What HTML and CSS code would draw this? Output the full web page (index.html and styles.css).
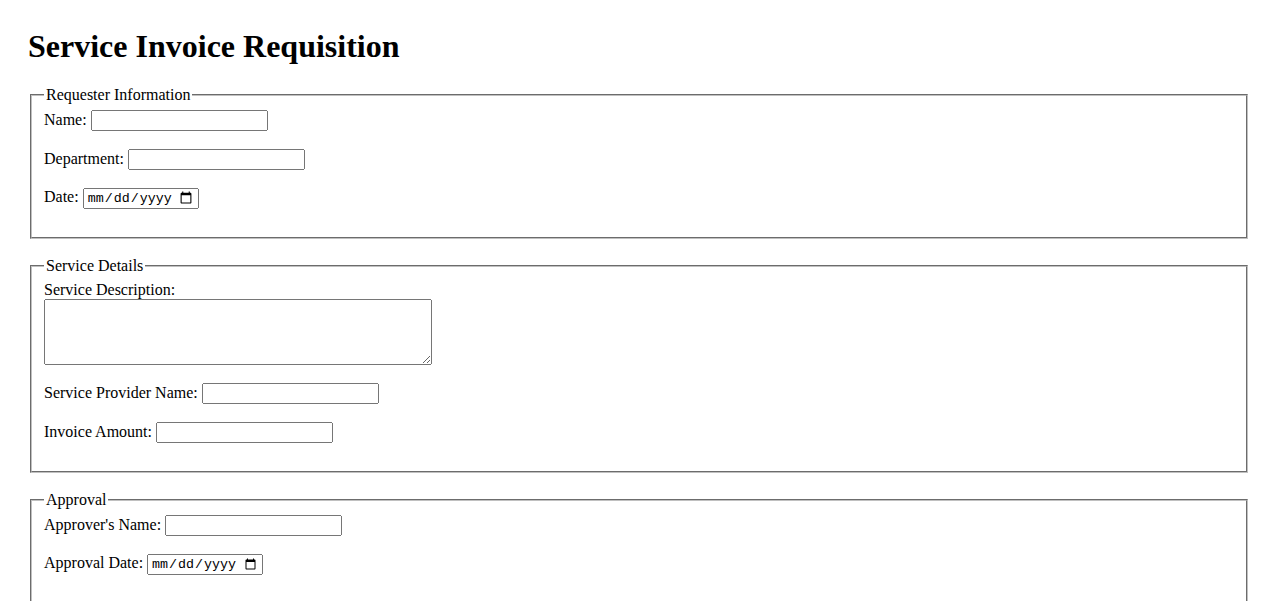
FILE: index.html
```html
<!DOCTYPE html>
<html>
<head>
<title>Service Invoice Requisition</title>
<link rel="stylesheet" href="styles.css">
</head>
<body>
  <h1>Service Invoice Requisition</h1>
  <form>
    <fieldset>
      <legend>Requester Information</legend>
      <div class="form-group">
        <label for="name">Name:</label>
        <input type="text" id="name" name="name">
      </div>
      <div class="form-group">
        <label for="department">Department:</label>
        <input type="text" id="department" name="department">
      </div>
      <div class="form-group">
        <label for="date">Date:</label>
        <input type="date" id="date" name="date">
      </div>
    </fieldset>

    <fieldset>
      <legend>Service Details</legend>
      <div class="form-group">
        <label for="description" class="block">Service Description:</label>
        <textarea id="description" name="description" rows="4" cols="50"></textarea>
      </div>
      <div class="form-group">
        <label for="provider">Service Provider Name:</label>
        <input type="text" id="provider" name="provider">
      </div>
      <div class="form-group">
        <label for="amount">Invoice Amount:</label>
        <input type="text" id="amount" name="amount">
      </div>
    </fieldset>

    <fieldset>
      <legend>Approval</legend>
      <div class="form-group">
        <label for="approver">Approver's Name:</label>
        <input type="text" id="approver" name="approver">
      </div>
      <div class="form-group">
        <label for="approval-date">Approval Date:</label>
        <input type="date" id="approval-date" name="approval_date">
      </div>
    </fieldset>
  </form>
</body>
</html>
```

FILE: styles.css
```css
body
{
  font-family: "Liberation Serif", "Times New Roman", serif;
  font-size: 16px;
  margin: 8px;
  padding: 20px;
}

h1
{
  font-size: 32px;
  margin: 0 0 21px 0;
}

fieldset
{
  margin: 0 2px 18px 2px;
  border: 2px groove #c0c0c0;
}

.form-group { margin-bottom: 18px; }

.block { display: block; line-height: 19px; }

input[type="text"]
{
  font-family: "Liberation Sans", Arial, sans-serif;
  font-size: 13.33px;
  width: 177px;
  height: 21px;
  box-sizing: border-box;
}

input[type="date"]
{
  font-family: "Liberation Mono", "Courier New", monospace;
  font-size: 13.33px;
  width: 116px;
  height: 21px;
  box-sizing: border-box;
  padding: 1px 2px;
}

textarea
{
  width: 388px;
  height: 66px;
  box-sizing: border-box;
  vertical-align: bottom;
}
```
